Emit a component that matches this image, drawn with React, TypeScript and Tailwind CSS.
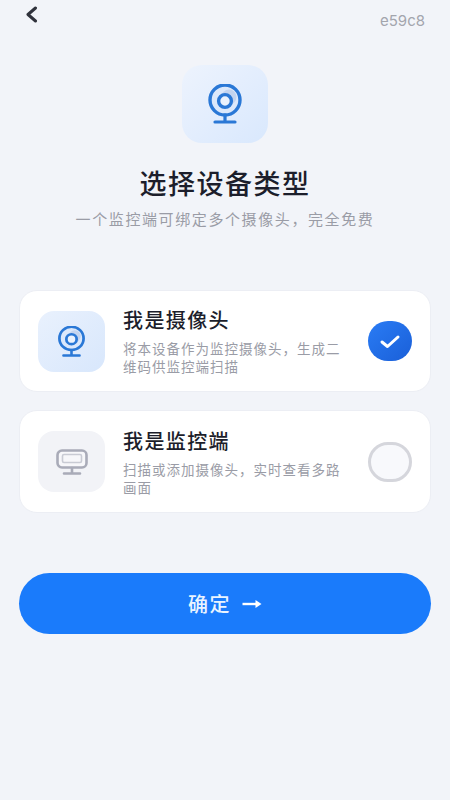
const font = { fontFamily: '"Noto Sans CJK SC", Inter, sans-serif' };

function CameraIcon({ width, height }: { width: number; height: number }) {
  return (
    <svg width={width} height={height} viewBox="0 0 36 40" fill="none" preserveAspectRatio="none">
      <circle cx="18" cy="16" r="15" fill="#dbe8fb" stroke="#2a78d6" strokeWidth="3.4" />
      <circle cx="22" cy="13" r="7.5" fill="#c3d4ef" />
      <circle cx="18" cy="17" r="6.4" fill="#eaf2fd" stroke="#2a78d6" strokeWidth="3.4" />
      <path d="M18 31v6M8 38h20" stroke="#2a78d6" strokeWidth="3.2" strokeLinecap="round" />
    </svg>
  );
}

function MonitorIcon() {
  return (
    <svg width="32" height="26" viewBox="0 0 32 26" fill="none">
      <rect x="1.5" y="1.5" width="29" height="17" rx="4.5" fill="#f7f7fa" stroke="#a9abb8" strokeWidth="2.6" />
      <rect x="6.5" y="5.5" width="19" height="8" rx="1.5" stroke="#c9cbd4" strokeWidth="1.6" />
      <path d="M16 19v5M8 24.5h16" stroke="#a9abb8" strokeWidth="2.6" strokeLinecap="round" />
    </svg>
  );
}

export default function App() {
  return (
    <main style={font} className="flex h-[800px] w-[450px] flex-col overflow-hidden bg-[#f2f4f9]">
      <header className="flex h-[32px] items-start justify-between pr-[25px] pl-[25px]">
        <svg width="13" height="18" viewBox="0 0 13 18" fill="none" className="mt-[6px]">
          <path d="M10.5 2 3 8.5l7.5 6.5" stroke="#30323c" strokeWidth="3" strokeLinecap="round" strokeLinejoin="round" />
        </svg>
        <span className="mt-[10px] font-['Inter'] text-[15px] leading-[22px] text-[#a3a5ad]">e59c8</span>
      </header>

      <section className="mt-[33px] flex flex-col items-center">
        <div className="flex h-[78px] w-[86px] items-center justify-center rounded-[20px] bg-gradient-to-br from-[#edf3fd] to-[#d9e8fd]">
          <CameraIcon width={36} height={40} />
        </div>
        <h1 className="mt-[21px] text-[27px] leading-[38px] font-medium tracking-[1.5px] text-[#1c1e2b]">选择设备类型</h1>
        <p className="mt-[6px] text-[15px] leading-[22px] tracking-[1.6px] text-[#9a9ca6]">一个监控端可绑定多个摄像头，完全免费</p>
      </section>

      <section className="mt-[60px] flex flex-col gap-[18px] px-[19px]">
        <div className="flex h-[102px] items-center rounded-[18px] border border-[#eceef4] bg-white pr-[18px] pl-[18px]">
          <div className="flex h-[61px] w-[67px] shrink-0 items-center justify-center rounded-[16px] bg-gradient-to-br from-[#e9f1fd] to-[#d8e7fc]">
            <CameraIcon width={29} height={31} />
          </div>
          <div className="ml-[18px] min-w-0 flex-1">
            <h2 className="text-[20px] leading-[26px] font-medium tracking-[1.4px] text-[#1c1e2b]">我是摄像头</h2>
            <p className="mt-[6px] w-[225px] text-[13.5px] leading-[18px] tracking-[1px] text-[#9a9ca6]">将本设备作为监控摄像头，生成二维码供监控端扫描</p>
          </div>
          <div className="flex h-[40px] w-[44px] shrink-0 items-center justify-center rounded-full bg-gradient-to-br from-[#2a7cf5] to-[#1a5fd8]">
            <svg width="22" height="15" viewBox="0 0 22 15" fill="none">
              <path d="M3 8 8.5 12.5 19 3" stroke="#fff" strokeWidth="3" strokeLinecap="round" strokeLinejoin="round" />
            </svg>
          </div>
        </div>

        <div className="flex h-[103px] items-center rounded-[18px] border border-[#eceef4] bg-white pr-[18px] pl-[18px]">
          <div className="flex h-[61px] w-[67px] shrink-0 items-center justify-center rounded-[16px] bg-[#f2f3f7]">
            <MonitorIcon />
          </div>
          <div className="ml-[18px] min-w-0 flex-1">
            <h2 className="text-[20px] leading-[26px] font-medium tracking-[1.4px] text-[#1c1e2b]">我是监控端</h2>
            <p className="mt-[6px] w-[225px] text-[13.5px] leading-[18px] tracking-[1px] text-[#9a9ca6]">扫描或添加摄像头，实时查看多路画面</p>
          </div>
          <div className="h-[40px] w-[44px] shrink-0 rounded-full border-[3px] border-[#d5d6dc] bg-[#f8f9fc]" />
        </div>
      </section>

      <div className="mt-[60px] px-[19px]">
        <button className="flex h-[61px] w-full items-center justify-center gap-[11px] rounded-full bg-[#1a7bfb] text-[20px] font-medium tracking-[1.5px] text-[#eaf4ff]">
          确定
          <svg width="20" height="10" viewBox="0 0 20 10" fill="none">
            <path d="M0.5 5H14" stroke="#fff" strokeWidth="2.4" />
            <path d="M13.5 1 19.5 5l-6 4z" fill="#fff" />
          </svg>
        </button>
      </div>
    </main>
  );
}
